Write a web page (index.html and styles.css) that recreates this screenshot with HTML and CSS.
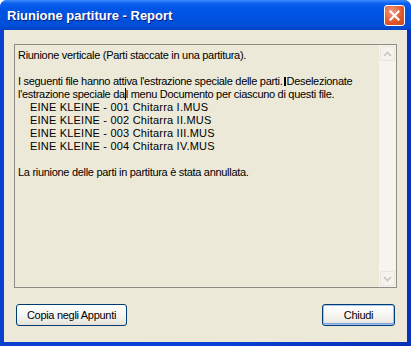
FILE: index.html
```html
<!DOCTYPE html>
<html lang="it">
<head>
    <meta charset="UTF-8">
    <title>Riunione partiture - Report</title>
    <link rel="stylesheet" href="styles.css">
</head>
<body>
    <div class="window">
        <div class="titlebar">
            <span class="title">Riunione partiture - Report</span>
            <button class="close" type="button" aria-label="Chiudi">
                <svg width="11" height="11" viewBox="0 0 11 11">
                    <path d="M1.5 1.5 L9.5 9.5 M9.5 1.5 L1.5 9.5" stroke="#fff" stroke-width="2.2" stroke-linecap="square"/>
                </svg>
            </button>
        </div>

        <div class="client">
            <div class="report">
                <div class="report-text">
                    <p>Riunione verticale (Parti staccate in una partitura).</p>
                    <p>&nbsp;</p>
                    <p>I seguenti file hanno attiva l'estrazione speciale delle parti.<span class="mark"></span>Deselezionate</p>
                    <p>l'estrazione speciale da<span class="caret"></span>l menu Documento per ciascuno di questi file.</p>
                    <p class="indent">EINE KLEINE - 001 Chitarra I.MUS</p>
                    <p class="indent">EINE KLEINE - 002 Chitarra II.MUS</p>
                    <p class="indent">EINE KLEINE - 003 Chitarra III.MUS</p>
                    <p class="indent">EINE KLEINE - 004 Chitarra IV.MUS</p>
                    <p>&nbsp;</p>
                    <p>La riunione delle parti in partitura è stata annullata.</p>
                </div>
                <div class="scrollbar">
                    <div class="arrow">
                        <svg width="9" height="6" viewBox="0 0 9 6"><path d="M1 5 L4.5 1.5 L8 5" fill="none" stroke="#c9c7ba" stroke-width="1.6"/></svg>
                    </div>
                    <div class="arrow">
                        <svg width="9" height="6" viewBox="0 0 9 6"><path d="M1 1 L4.5 4.5 L8 1" fill="none" stroke="#c9c7ba" stroke-width="1.6"/></svg>
                    </div>
                </div>
            </div>

            <div class="buttons">
                <button class="btn btn-wide" type="button">Copia negli Appunti</button>
                <button class="btn btn-default" type="button">Chiudi</button>
            </div>
        </div>
    </div>
</body>
</html>
```

FILE: styles.css
```css
body {
    margin: 0;
    padding: 0;
    background-color: #ffffff;
    font-family: "Liberation Sans", Arial, sans-serif;
}

.window {
    width: 411px;
    height: 346px;
    box-sizing: border-box;
    display: flex;
    flex-direction: column;
    background: linear-gradient(to right, #0a3fd0, #0842d6 50%, #0631b8);
    border-radius: 7px 7px 0 0;
    overflow: hidden;
}

.titlebar {
    height: 30px;
    flex: none;
    display: flex;
    align-items: center;
    justify-content: space-between;
    padding: 0 6px 0 7px;
    background: linear-gradient(to bottom, #3c8cf8 0%, #0a5ff0 12%, #0055e6 30%, #0151e0 60%, #004fd8 85%, #0343c4 100%);
}

.title {
    color: #ffffff;
    font-weight: bold;
    font-size: 13px;
    text-shadow: 1px 1px 0 #0a1e80;
}

.close {
    width: 21px;
    height: 21px;
    margin-top: 1px;
    padding: 0;
    display: flex;
    align-items: center;
    justify-content: center;
    border: 1px solid #ffffff;
    border-radius: 3px;
    background: radial-gradient(circle at 35% 30%, #f09a7c, #e0562c 60%, #c9461f);
}

.client {
    flex: 1;
    margin: 0 4px 4px 4px;
    padding: 14px 10px 16px 10px;
    background-color: #ece9d8;
    display: flex;
    flex-direction: column;
}

.report {
    height: 244px;
    box-sizing: border-box;
    border: 1px solid #8d8c86;
    display: flex;
}

.report-text {
    flex: 1;
    padding: 4px 0 0 3px;
    font-size: 11px;
    line-height: 13px;
    letter-spacing: -0.3px;
    color: #000000;
    white-space: nowrap;
    overflow: hidden;
}

.report-text p {
    margin: 0;
}

.indent {
    padding-left: 12px;
    letter-spacing: 0.2px;
}

.caret {
    display: inline-block;
    width: 1px;
    height: 12px;
    background: #000000;
    vertical-align: -2px;
}

.mark {
    display: inline-block;
    width: 2px;
    height: 9px;
    margin: 0 1px;
    background: #000000;
    vertical-align: -1px;
}

.scrollbar {
    width: 17px;
    display: flex;
    flex-direction: column;
    justify-content: space-between;
    background-color: #f5f4ee;
}

.arrow {
    width: 15px;
    height: 15px;
    margin: 1px;
    box-sizing: border-box;
    border: 1px solid #e8e6dc;
    border-radius: 2px;
    background-color: #f4f3ee;
    display: flex;
    align-items: center;
    justify-content: center;
}

.buttons {
    margin-top: auto;
    display: flex;
    justify-content: space-between;
    padding: 0 2px;
}

.btn {
    height: 22px;
    box-sizing: border-box;
    border: 1px solid #003c74;
    border-radius: 3px;
    background: linear-gradient(to bottom, #ffffff 0%, #f4f3ee 60%, #e3e2da 100%);
    font-family: "Liberation Sans", Arial, sans-serif;
    font-size: 11px;
    letter-spacing: -0.3px;
    color: #000000;
    padding: 0;
}

.btn-wide {
    width: 111px;
}

.btn-default {
    width: 73px;
    box-shadow: inset 0 0 0 1px #a8c4ef, inset 0 -1px 0 1px #7b9fe0;
}
```
